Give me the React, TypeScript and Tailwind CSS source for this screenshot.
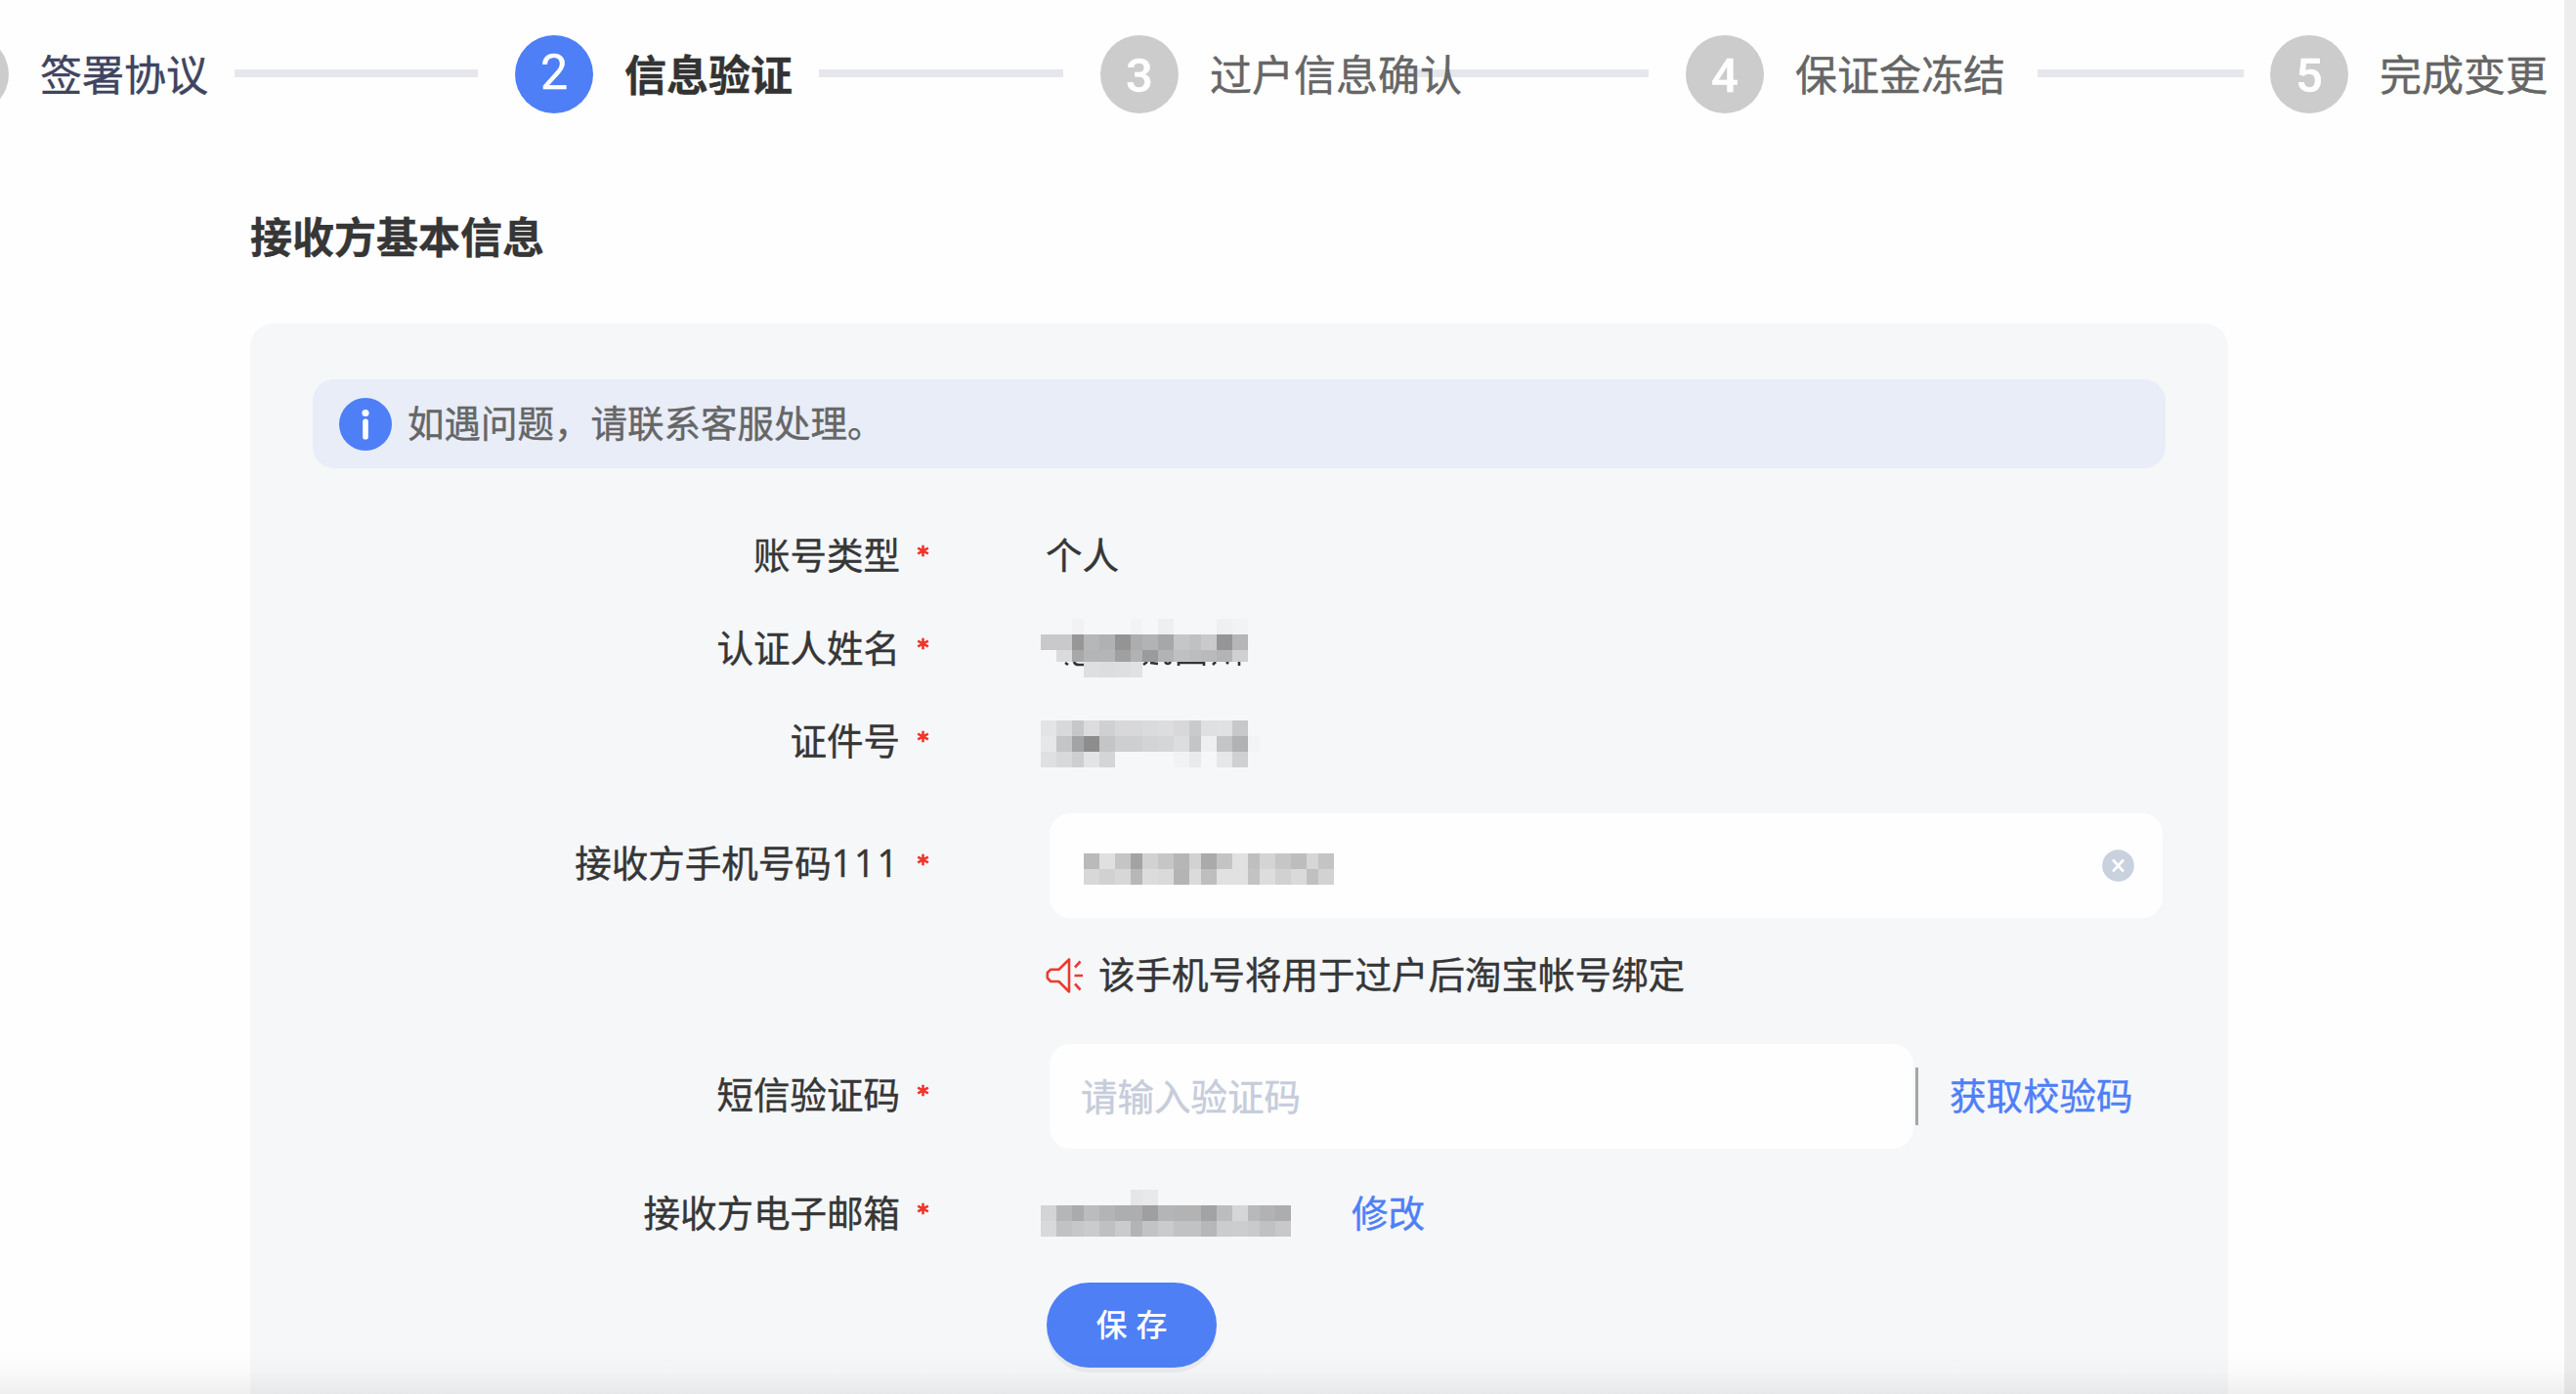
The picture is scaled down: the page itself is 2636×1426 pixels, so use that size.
import React from "react";

const BG = "";

/* Column widths of the censor mosaic, in pixels */
const COLS = [16, 16, 12, 16, 16, 16, 12, 16, 16, 16, 12, 16, 16, 16, 12, 16, 16];
const PHONE_COLS = [16, 16, 16, 12, 16, 16, 16, 12, 16, 16, 16, 12, 16, 16, 16, 12, 16];

type MosaicRow = { h: number; cells: string[] };

const NAME: MosaicRow[] = [
  { h: 16, cells: [BG, BG, "#f2f2f4", BG, BG, BG, "#f2f3f4", BG, "#eeeff1", BG, BG, BG, "#eff0f1", "#f2f3f4"] },
  { h: 16, cells: ["#c9c9cb", "#c9c9cb", "#979797", "#b6b7b9", "#b0b1b3", "#949494", "#acadaf", "#b2b3b5", "#a7a7a9", "#c5c6c8", "#c0c1c3", "#cacacc", "#959595", "#b6b6b8"] },
  { h: 12, cells: [BG, "#dadbdd", "#a8a8a9", "#b4b5b7", "#b4b5b7", "#a0a0a0", "#b1b2b4", "#9a9b9d", "#b2b3b5", "#bfc0c2", "#bdbcbe", "#b9babc", "#b3b4b6", "#d0d0d2"] },
  { h: 16, cells: [BG, BG, BG, "#dedfe1", "#dcdddf", "#dedfe1", "#e1e2e4"] },
];

const ID_NO: MosaicRow[] = [
  { h: 16, cells: ["#e3e4e6", "#d8d9db", "#c6c7c9", "#dcdcdf", "#cfd0d2", "#d8d7d9", "#d7d8da", "#dadbdd", "#dcdddf", "#d8d8da", "#c9cacc", "#dfe0e2", "#e0e1e3", "#c7c8ca"] },
  { h: 16, cells: ["#e6e7e9", "#c4c5c7", "#a3a4a6", "#8e8d8e", "#c4c5c7", "#cecfd1", "#cecfd1", "#d3d4d6", "#d5d6d8", "#dcdddf", "#c4c5c7", "#eeeff1", "#c4c5c7", "#b1b2b4", "#f2f3f5"] },
  { h: 16, cells: ["#dfe0e2", "#d8d9db", "#cdced0", "#e3e4e6", "#d4d5d7", BG, BG, BG, BG, "#f1f2f4", "#e9eaec", BG, "#e6e7e9", "#cfd0d2"] },
];

const PHONE: MosaicRow[] = [
  { h: 16, cells: ["#bababa", "#e0e0e0", "#c5c5c5", "#a3a3a3", "#d2d2d2", "#c6c6c6", "#b6b6b6", "#d2d2d2", "#aaaaaa", "#c4c4c4", "#e1e1e1", "#bfbfbf", "#d4d4d4", "#c6c6c6", "#bdbdbd", "#d6d6d6", "#c4c4c4"] },
  { h: 16, cells: ["#d8d8d8", "#d1d1d1", "#d7d7d7", "#b7b7b7", "#dcdcdc", "#dadada", "#b4b4b4", "#dbdbdb", "#bebebe", "#e1e1e1", "#e1e1e1", "#c3c3c3", "#dddddd", "#d1d1d1", "#dadada", "#c0c0c0", "#d2d2d2"] },
];

const MAIL: MosaicRow[] = [
  { h: 16, cells: [BG, BG, BG, BG, BG, BG, "#e5e6e7", "#e8e9ea"] },
  { h: 16, cells: ["#d3d4d6", "#b5b6b8", "#aaabad", "#bcbcbc", "#b3b4b6", "#adaeb0", "#aeaeaf", "#9f9fa1", "#b4b5b7", "#b3b3b4", "#b3b3b3", "#a2a3a4", "#bcbdbf", "#d5d6d8", "#b8b9bb", "#b2b2b4", "#adadad"] },
  { h: 16, cells: ["#d8d9db", "#c1c2c4", "#c6c7c9", "#cacbcd", "#bfc0c2", "#cacbcd", "#b3b4b6", "#c2c3c5", "#cacbcd", "#c1c2c4", "#c1c2c4", "#b6b7b9", "#cbcccd", "#cccdcf", "#c9cacc", "#c0c1c3", "#c8c8ca"] },
];

function Mosaic({ rows, cols = COLS }: { rows: MosaicRow[]; cols?: number[] }) {
  return (
    <div className="flex flex-col" aria-hidden="true">
      {rows.map((row, r) => (
        <div key={r} className="flex" style={{ height: row.h }}>
          {row.cells.map((c, i) => (
            <div key={i} className="shrink-0" style={{ width: cols[i], backgroundColor: c || "transparent" }} />
          ))}
        </div>
      ))}
    </div>
  );
}

function StepDot({ n, active }: { n?: string; active?: boolean }) {
  return (
    <div
      className={
        active
          ? "flex size-20 shrink-0 items-center justify-center rounded-full bg-[#4e7ff7] pb-[4px] font-[Roboto] text-[50px] leading-none text-white"
          : "flex size-20 shrink-0 items-center justify-center rounded-full bg-[#cccccc] pt-[2px] font-[Roboto] text-[49px] font-medium leading-none text-white"
      }
    >
      {n}
    </div>
  );
}

function Line({ className }: { className: string }) {
  return <div className={`mt-[35px] h-2 shrink-0 self-start bg-[#e5e7ec] ${className}`} />;
}

function Steps() {
  return (
    <div className="flex h-20 items-center whitespace-nowrap text-[43px] leading-none text-[#666666]">
      <div className="flex h-20 w-[598px] shrink-0 items-center">
        <StepDot />
        <span className="mb-[3px] ml-8 w-[199px] text-[#40445f]">签署协议</span>
        <Line className="w-[249px]" />
      </div>
      <div className="flex h-20 w-[599px] shrink-0 items-center">
        <StepDot n="2" active />
        <span className="mb-[3px] ml-8 w-[199px] font-bold text-[#333333]">信息验证</span>
        <Line className="w-[250px]" />
      </div>
      <div className="flex h-20 w-[599px] shrink-0 items-center">
        <StepDot n="3" />
        <span className="relative z-10 mb-[3px] ml-8 w-[199px]">过户信息确认</span>
        <Line className="w-[250px]" />
      </div>
      <div className="flex h-20 w-[598px] shrink-0 items-center">
        <StepDot n="4" />
        <span className="mb-[3px] ml-8 w-[248px]">保证金冻结</span>
        <Line className="w-[211px]" />
      </div>
      <div className="flex h-20 shrink-0 items-center">
        <StepDot n="5" />
        <span className="mb-[3px] ml-8">完成变更</span>
      </div>
    </div>
  );
}

function Asterisk() {
  return (
    <svg className="mb-[5px] ml-[17px] size-[13px] shrink-0" viewBox="0 0 13 13" fill="none" stroke="#f0352b" strokeWidth="2.6">
      <path d="M6.5 0.7v11.6M1.2 3.6l10.6 5.8M11.8 3.6L1.2 9.4" />
    </svg>
  );
}

function Field({ label, className, children }: { label: React.ReactNode; className: string; children: React.ReactNode }) {
  return (
    <div className={`flex items-center ${className}`}>
      <div className="mb-[7px] flex w-[631px] shrink-0 items-center justify-end">
        <span className="whitespace-nowrap">{label}</span>
        <Asterisk />
      </div>
      {children}
    </div>
  );
}

export default function App() {
  return (
    <div className="relative flex h-[1426px] w-[2636px] overflow-hidden bg-[#fefefe] font-['Noto_Sans_CJK_SC',sans-serif] text-[#363636] [-webkit-text-stroke:0.4px]">
      <main className="flex w-[2624px] shrink-0 flex-col overflow-hidden">
        <div className="-ml-[71px] mt-9">
          <Steps />
        </div>
        <h1 className="ml-[256px] mt-[94px] h-[60px] text-[43px] font-bold leading-[60px]">接收方基本信息</h1>
        <section className="ml-[256px] mt-[61px] w-[2024px] flex-1 rounded-t-[24px] bg-[#f5f7f9] px-16 pt-[57px] text-[37.5px] leading-none">
          <div className="flex h-[91px] items-center rounded-[22px] bg-[#e8edf8] pl-[27px] text-[#666666]">
            <svg className="size-[54px] shrink-0" viewBox="0 0 54 54">
              <circle cx="27" cy="27" r="27" fill="#4e7ff7" />
              <circle cx="27" cy="15.5" r="3.6" fill="#fff" />
              <rect x="24.2" y="21.5" width="5.6" height="21" rx="2.6" fill="#fff" />
            </svg>
            <span className="mb-[5px] ml-4">如遇问题，请联系客服处理。</span>
          </div>

          <div className="mt-[43px] flex flex-col">
            <Field label="账号类型" className="h-[95px]">
              <span className="mb-[7px] ml-[119px]">个人</span>
            </Field>
            <Field label="认证人姓名" className="h-[95px]">
              <div className="relative -mt-[3px] ml-[114px]">
                <Mosaic rows={NAME} />
                <svg className="absolute left-0 top-11 h-[5px] w-[212px]" viewBox="0 0 212 5" fill="none" stroke="#333" strokeWidth="2.6">
                  <path d="M25 1l3 2M34 0q1 3 5 3h5M105 3l4-3M112 1l8 1M127 0q3 4 6 0M141 4V1h26v3M176 3l3-3M190 0l2 2M203 0v4" />
                </svg>
              </div>
            </Field>
            <Field label="证件号" className="h-[95px]">
              <div className="ml-[114px] mt-[3px]">
                <Mosaic rows={ID_NO} />
              </div>
            </Field>

            <Field
              label={
                <>
                  接收方手机号码<span className="font-['Open_Sans'] tracking-[2px]">111</span>
                </>
              }
              className="mt-[25px] h-[107px]"
            >
              <div className="ml-[123px] flex h-[107px] w-[1139px] items-center rounded-[21px] bg-[#fefefe] pl-[35px] pr-[29px]">
                <div className="mt-[7px]">
                  <Mosaic rows={PHONE} cols={PHONE_COLS} />
                </div>
                <svg className="ml-auto size-[33px]" viewBox="0 0 33 33">
                  <circle cx="16.5" cy="16.5" r="16.3" fill="#c9d0de" />
                  <path d="M11 10.500l11 12M22 10.500l-11 12" stroke="#fff" strokeWidth="2.6" fill="none" />
                </svg>
              </div>
            </Field>
            <div className="ml-[750px] mt-[30px] flex h-[58px] items-center">
              <svg className="h-[36px] w-[39px] shrink-0" viewBox="0 0 39 36" fill="none" stroke="#ee3a33" strokeWidth="2.6">
                <path d="M24 1.500v33L13.500 24H5.200L1.800 20.500V15L5.200 11.800h8.300z" strokeLinejoin="round" />
                <path d="M30 9.500l5.500-6M29.500 18H38M30 26.500l5.500 6" />
              </svg>
              <span className="mb-[6px] ml-[15px]">该手机号将用于过户后淘宝帐号绑定</span>
            </div>

            <Field label="短信验证码" className="mt-[41px] h-[107px]">
              <div className="ml-[123px] flex h-[107px] w-[884px] items-center rounded-[21px] bg-[#fefefe] pl-8 text-[#c6ccda]">
                <span className="mb-[4px]">请输入验证码</span>
              </div>
              <div className="ml-[2px] h-[59px] w-[3px] bg-[#a6a6a6]" />
              <span className="mb-[6px] ml-8 text-[#4e7ff7]">获取校验码</span>
            </Field>
            <Field label="接收方电子邮箱" className="mt-[20px] h-[94px]">
              <div className="-mt-[2px] ml-[114px]">
                <Mosaic rows={MAIL} />
              </div>
              <span className="mb-[6px] ml-[62px] text-[#4e7ff7]">修改</span>
            </Field>
            <button className="ml-[751px] mt-[23px] flex h-[87px] w-[174px] items-center justify-center rounded-full bg-[#4e7ff5] text-[32px] font-medium leading-none text-white shadow-[0_5px_0_#e9ebee] [-webkit-text-stroke:0px]">
              <span className="mb-[6px] whitespace-pre [word-spacing:2px]">保 存</span>
            </button>
          </div>
        </section>
      </main>
      <div className="w-3 shrink-0 bg-[#ededed]" />
      <div className="pointer-events-none absolute inset-x-0 bottom-0 h-[46px] bg-gradient-to-b from-black/0 via-black/[0.015] to-black/[0.06]" />
    </div>
  );
}
